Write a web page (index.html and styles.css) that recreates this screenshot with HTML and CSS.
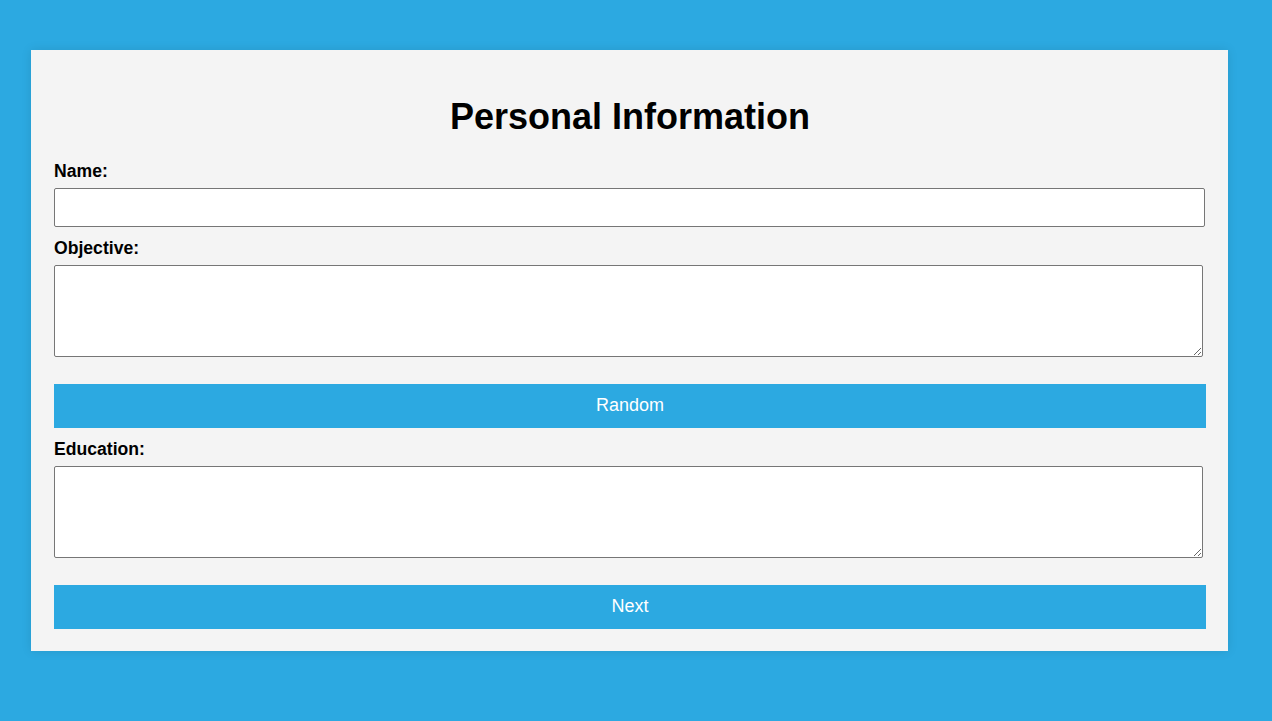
FILE: index.html
```html
<!DOCTYPE html>
<html lang="en">
<head>
<meta charset="utf-8">
<title>Personal Information</title>
<link rel="stylesheet" href="styles.css">
</head>
<body>
<main class="card">
  <h1 class="title">Personal Information</h1>
  <label class="label" for="name">Name:</label>
  <input class="field" id="name" type="text">
  <label class="label" for="objective">Objective:</label>
  <textarea class="area" id="objective"></textarea>
  <button class="btn" type="button">Random</button>
  <label class="label" for="education">Education:</label>
  <textarea class="area" id="education"></textarea>
  <button class="btn" type="button">Next</button>
</main>
</body>
</html>
```

FILE: styles.css
```css
html, body {
  margin: 0;
  padding: 0;
}
body {
  background: #2ca9e1;
  font-family: "Liberation Sans", Arial, sans-serif;
  min-height: 721px;
  padding-top: 50px;
  box-sizing: border-box;
}
.card {
  display: flex;
  flex-direction: column;
  align-items: flex-start;
  box-sizing: border-box;
  width: 1197px;
  margin-left: 31px;
  padding: 22px 22px 22px 23px;
  background: #f4f4f4;
  box-shadow: 0 0 10px rgba(0, 0, 0, 0.1);
}
.title {
  align-self: stretch;
  margin: 24px 0 24px;
  font-size: 36px;
  line-height: 42px;
  font-weight: bold;
  text-align: center;
  color: #000;
}
.label {
  display: block;
  font-size: 17.6px;
  line-height: 18px;
  font-weight: bold;
  color: #000;
  margin-bottom: 8px;
}
.field {
  display: block;
  box-sizing: border-box;
  width: 1151px;
  height: 39px;
  margin: 0 0 12px;
  padding: 8px;
  border: 1px solid #767676;
  border-radius: 2px;
  background: #fff;
  font-family: "Liberation Sans", Arial, sans-serif;
  font-size: 16px;
}
.area {
  display: block;
  box-sizing: border-box;
  width: 1149px;
  height: 92px;
  margin: 0 0 27px;
  padding: 8px;
  border: 1px solid #767676;
  border-radius: 2px;
  background: #fff;
  font-family: "Liberation Sans", Arial, sans-serif;
  font-size: 16px;
}
.btn {
  display: block;
  box-sizing: border-box;
  width: 1152px;
  height: 44px;
  margin: 0 0 12px;
  padding: 0 0 1px;
  border: none;
  background: #2ca9e1;
  color: #fff;
  font-family: "Liberation Sans", Arial, sans-serif;
  font-size: 18px;
  cursor: pointer;
}
.btn:last-child {
  margin-bottom: 0;
}
```
